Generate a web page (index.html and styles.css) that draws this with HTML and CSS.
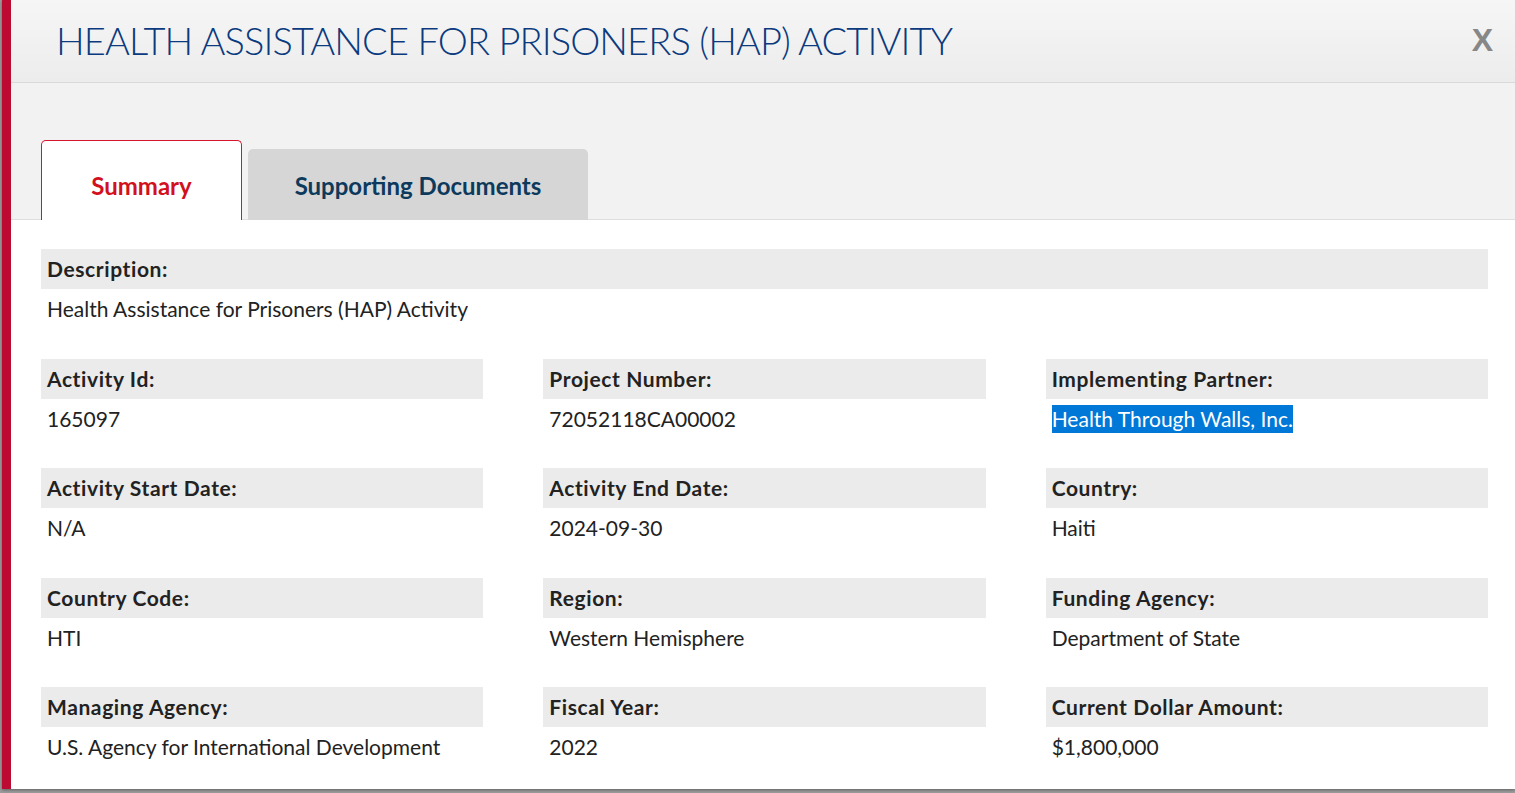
FILE: index.html
```html
<!DOCTYPE html>
<html lang="en">
<head>
    <meta charset="UTF-8">
    <meta name="viewport" content="width=device-width, initial-scale=1.0">
    <title>Activity</title>
    <link rel="stylesheet" href="styles.css">
</head>
<body>
    <div class="modal">
        <!-- 标题栏 -->
        <div class="modal_header">
            <h1 class="modal_title">HEALTH ASSISTANCE FOR PRISONERS (HAP) ACTIVITY</h1>
            <span class="modal_close">X</span>
        </div>
        <!-- 选项卡 -->
        <div class="tab_bar">
            <div class="tab tab_active">Summary</div>
            <div class="tab">Supporting Documents</div>
        </div>
        <div class="modal_body">
            <div class="field field_wide">
                <div class="field_label">Description:</div>
                <div class="field_value">Health Assistance for Prisoners (HAP) Activity</div>
            </div>
            <div class="field_grid">
                <div class="field">
                    <div class="field_label">Activity Id:</div>
                    <div class="field_value">165097</div>
                </div>
                <div class="field">
                    <div class="field_label">Project Number:</div>
                    <div class="field_value">72052118CA00002</div>
                </div>
                <div class="field">
                    <div class="field_label">Implementing Partner:</div>
                    <div class="field_value"><span class="selected_text">Health Through Walls, Inc.</span></div>
                </div>
                <div class="field">
                    <div class="field_label">Activity Start Date:</div>
                    <div class="field_value">N/A</div>
                </div>
                <div class="field">
                    <div class="field_label">Activity End Date:</div>
                    <div class="field_value">2024-09-30</div>
                </div>
                <div class="field">
                    <div class="field_label">Country:</div>
                    <div class="field_value">Haiti</div>
                </div>
                <div class="field">
                    <div class="field_label">Country Code:</div>
                    <div class="field_value">HTI</div>
                </div>
                <div class="field">
                    <div class="field_label">Region:</div>
                    <div class="field_value">Western Hemisphere</div>
                </div>
                <div class="field">
                    <div class="field_label">Funding Agency:</div>
                    <div class="field_value">Department of State</div>
                </div>
                <div class="field">
                    <div class="field_label">Managing Agency:</div>
                    <div class="field_value">U.S. Agency for International Development</div>
                </div>
                <div class="field">
                    <div class="field_label">Fiscal Year:</div>
                    <div class="field_value">2022</div>
                </div>
                <div class="field">
                    <div class="field_label">Current Dollar Amount:</div>
                    <div class="field_value">$1,800,000</div>
                </div>
            </div>
        </div>
    </div>
</body>
</html>
```

FILE: styles.css
```css
html,body{
    padding:0;
    margin:0;
    height:100%;
    width:100%;
    overflow:hidden;
    background:#9c9c9c;
    font-family:Lato, "Noto Sans", sans-serif;
}
.modal{
    box-sizing:border-box;
    margin-left:2px;
    height:789px;
    border-left:9px solid #bd0a33;
    background:#ffffff;
    box-shadow:0 1px 3px rgba(0,0,0,0.4);
}
/* 标题栏 */
.modal_header{
    display:flex;
    align-items:center;
    justify-content:space-between;
    box-sizing:border-box;
    height:83px;
    padding:0 22px 2px 45px;
    border-bottom:1px solid #d9d9d9;
    background:linear-gradient(#f6f6f6, #ececec);
}
.modal_title{
    margin:0;
    font-size:38px;
    font-weight:300;
    color:#0b3a7e;
    letter-spacing:-0.9px;
}
.modal_close{
    font-size:32px;
    font-weight:700;
    color:#878787;
    font-family:"Liberation Sans", sans-serif;
}
/* 选项卡 */
.tab_bar{
    display:flex;
    align-items:flex-end;
    gap:6px;
    box-sizing:border-box;
    height:137px;
    padding-left:30px;
    background:#f2f2f2;
    border-bottom:1px solid #dedede;
}
.tab{
    display:flex;
    align-items:center;
    justify-content:center;
    box-sizing:border-box;
    width:340px;
    height:71px;
    margin-bottom:-1px;
    padding-top:1px;
    font-size:24px;
    font-weight:700;
    color:#0d3a5c;
    background:#d6d6d6;
    border-radius:5px 5px 0 0;
}
.tab.tab_active{
    width:201px;
    height:80px;
    padding-top:9px;
    color:#d2101e;
    background:#ffffff;
    border:1px solid #d8142a;
    border-bottom:none;
}
/* 内容区 */
.modal_body{
    padding:29px 27px 0 30px;
}
.field_grid{
    display:grid;
    grid-template-columns:repeat(3, 1fr);
    column-gap:60px;
}
.field{
    margin-bottom:29.5px;
}
.field_label{
    box-sizing:border-box;
    height:40px;
    padding:0 6px;
    line-height:40px;
    font-size:21px;
    font-weight:700;
    letter-spacing:0.6px;
    color:#222222;
    background:#ebebeb;
}
.field_value{
    padding:6px 6px;
    line-height:28px;
    font-size:21px;
    color:#222222;
}
.selected_text{
    display:inline-block;
    color:#ffffff;
    background:#0078d7;
}
```
